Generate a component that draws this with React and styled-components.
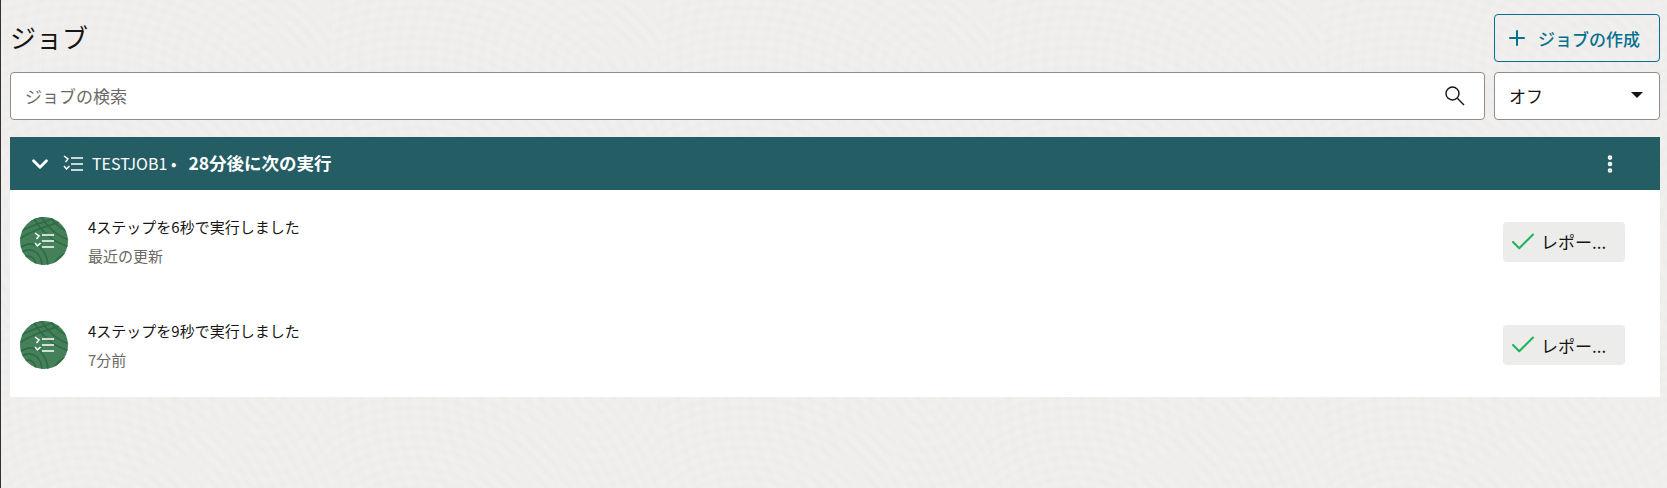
import styled, { createGlobalStyle } from "styled-components";
import { Check, ChevronDown, EllipsisVertical, Plus } from "lucide-react";

const jobs = [
  { id: 1, title: "4ステップを6秒で実行しました", when: "最近の更新" },
  { id: 2, title: "4ステップを9秒で実行しました", when: "7分前" },
];

function StepsIcon() {
  return (
    <svg width="22" height="22" viewBox="0 0 22 22" fill="none" stroke="currentColor" strokeWidth="1.5">
      <path d="M2 3 L6 6 L3.5 9" />
      <path d="M2 13 L4.5 16 L7.5 13" />
      <path d="M9 5 H21 M9 11 H21 M9 17 H21" />
    </svg>
  );
}

function SearchGlyph() {
  return (
    <svg width="20" height="20" viewBox="0 0 20 20" fill="none" stroke="#161513" strokeWidth="1.4">
      <circle cx="7.5" cy="7.5" r="6.5" />
      <path d="M12.3 12.3 L19 19" />
    </svg>
  );
}

function LeafPattern() {
  return (
    <LeafSvg viewBox="0 0 48 48" fill="none" stroke="#2f6a43" strokeWidth="1.6">
      <path d="M-2 10 C10 2 22 0 32 -2" />
      <path d="M-2 16 C10 8 24 5 38 0" />
      <path d="M-2 23 C12 12 28 10 44 3" />
      <path d="M12 -2 C20 14 34 26 50 30" />
      <path d="M20 -2 C27 10 38 20 50 23" />
      <path d="M29 -2 C33 6 42 13 50 15" />
      <path d="M-2 32 C8 25 14 26 20 30 C26 36 28 42 28 50" />
      <path d="M-2 38 C6 31 12 32 17 36 C21 40 22 45 22 50" />
      <path d="M-2 44 C4 38 10 38 13 41 C16 44 16 47 16 50" />
      <path d="M33 50 C36 41 42 37 50 35" />
      <path d="M40 50 C42 46 46 43 50 42" />
    </LeafSvg>
  );
}

export default function App() {
  return (
    <>
      <GlobalStyle />
      <Page>
        <TitleRow>
          <Title>ジョブ</Title>
          <CreateButton>
            <Plus size={24} strokeWidth={2} />
            <span>ジョブの作成</span>
          </CreateButton>
        </TitleRow>

        <FilterRow>
          <SearchBox>
            <Placeholder>ジョブの検索</Placeholder>
            <SearchGlyph />
          </SearchBox>
          <SelectBox>
            <SelectValue>オフ</SelectValue>
            <Caret />
          </SelectBox>
        </FilterRow>

        <JobHeader>
          <ChevronDown size={26} strokeWidth={2.6} />
          <StepsIcon />
          <JobName>TESTJOB1 •</JobName>
          <NextRun>28分後に次の実行</NextRun>
          <MenuButton>
            <EllipsisVertical size={22} strokeWidth={3} />
          </MenuButton>
        </JobHeader>

        <JobList>
          {jobs.map((job) => (
            <JobRow key={job.id}>
              <Avatar>
                <LeafPattern />
                <StepsIcon />
              </Avatar>
              <JobText>
                <JobTitle>{job.title}</JobTitle>
                <JobWhen>{job.when}</JobWhen>
              </JobText>
              <ReportButton>
                <Check size={30} strokeWidth={1.6} color="#1fb45a" />
                <span>レポー...</span>
              </ReportButton>
            </JobRow>
          ))}
        </JobList>
      </Page>
    </>
  );
}

const GlobalStyle = createGlobalStyle`
  html, body {
    margin: 0;
    height: 100%;
    overflow: hidden;
  }
  body {
    font-family: "Noto Sans CJK JP", "Noto Sans", sans-serif;
    color: #161513;
    background: #f1efed;
  }
`;

const Page = styled.div`
  box-sizing: border-box;
  height: 488px;
  padding: 14px 7px 0 9px;
  border-left: 1px solid #333;
  background-color: #f0eeec;
  background-image:
    repeating-radial-gradient(circle at 25% 75%, rgba(255, 255, 255, 0) 0, rgba(255, 255, 255, 0.14) 5px, rgba(255, 255, 255, 0) 10px),
    repeating-radial-gradient(circle at 80% 20%, rgba(120, 110, 100, 0) 0, rgba(120, 110, 100, 0.014) 6px, rgba(120, 110, 100, 0) 12px);
  background-size: 330px 330px;
`;

const TitleRow = styled.div`
  display: flex;
  align-items: center;
  justify-content: space-between;
  height: 48px;
`;

const Title = styled.h1`
  margin: 0 0 4px;
  font-size: 26px;
  font-weight: 400;
`;

const CreateButton = styled.button`
  display: flex;
  align-items: center;
  gap: 9px;
  box-sizing: border-box;
  width: 166px;
  height: 48px;
  padding: 0 10px;
  border: 1px solid #04708d;
  border-radius: 4px;
  background: transparent;
  color: #04708d;
  font: 500 17px "Noto Sans CJK JP", sans-serif;
`;

const FilterRow = styled.div`
  display: flex;
  gap: 9px;
  margin-top: 10px;
`;

const SearchBox = styled.div`
  display: flex;
  flex: 1;
  align-items: center;
  justify-content: space-between;
  box-sizing: border-box;
  height: 48px;
  padding: 0 19px 0 14px;
  border: 1px solid #8f8d8b;
  border-radius: 4px;
  background: #fff;
`;

const Placeholder = styled.span`
  margin-bottom: 2px;
  font-size: 17px;
  color: #6b6965;
`;

const SelectBox = styled.div`
  display: flex;
  align-items: center;
  justify-content: space-between;
  box-sizing: border-box;
  width: 166px;
  height: 48px;
  padding: 0 16px 0 14px;
  border: 1px solid #8f8d8b;
  border-radius: 4px;
  background: #fff;
  font-size: 17px;
`;

const SelectValue = styled.span`
  margin-bottom: 2px;
`;

const Caret = styled.i`
  width: 0;
  height: 0;
  margin-bottom: 3px;
  border-left: 6px solid transparent;
  border-right: 6px solid transparent;
  border-top: 6px solid #161513;
`;

const JobHeader = styled.div`
  display: flex;
  align-items: center;
  height: 53px;
  margin-top: 17px;
  padding: 0 39px 0 17px;
  background: #255d64;
  color: #fff;
  svg:nth-child(2) {
    margin-left: 9px;
  }
`;

const JobName = styled.span`
  margin: 0 0 2px 8px;
  font-size: 16px;
`;

const NextRun = styled.span`
  margin: 0 0 2px 12px;
  font-size: 17.5px;
  font-weight: 700;
`;

const MenuButton = styled.span`
  display: flex;
  margin-left: auto;
`;

const JobList = styled.div`
  padding: 0 35px 0 10px;
  background: #fff;
`;

const JobRow = styled.div`
  display: flex;
  align-items: center;
  height: 103.5px;
`;

const Avatar = styled.div`
  position: relative;
  display: flex;
  align-items: center;
  justify-content: center;
  flex: none;
  width: 48px;
  height: 48px;
  margin-bottom: 1px;
  border-radius: 50%;
  overflow: hidden;
  background: #44805a;
  color: #fff;
  svg:last-child {
    position: relative;
  }
`;

const LeafSvg = styled.svg`
  position: absolute;
  inset: 0;
`;

const JobText = styled.div`
  flex: 1;
  margin-left: 20px;
`;

const JobTitle = styled.div`
  font-size: 15px;
  line-height: 20px;
`;

const JobWhen = styled.div`
  margin-top: 9px;
  font-size: 15px;
  line-height: 20px;
  color: #6b6965;
`;

const ReportButton = styled.button`
  display: flex;
  align-items: center;
  gap: 3px;
  box-sizing: border-box;
  width: 122px;
  height: 40px;
  padding: 0 5px;
  border: 0;
  border-radius: 4px;
  background: #ececeb;
  color: #161513;
  font: 400 17px "Noto Sans CJK JP", sans-serif;
`;
